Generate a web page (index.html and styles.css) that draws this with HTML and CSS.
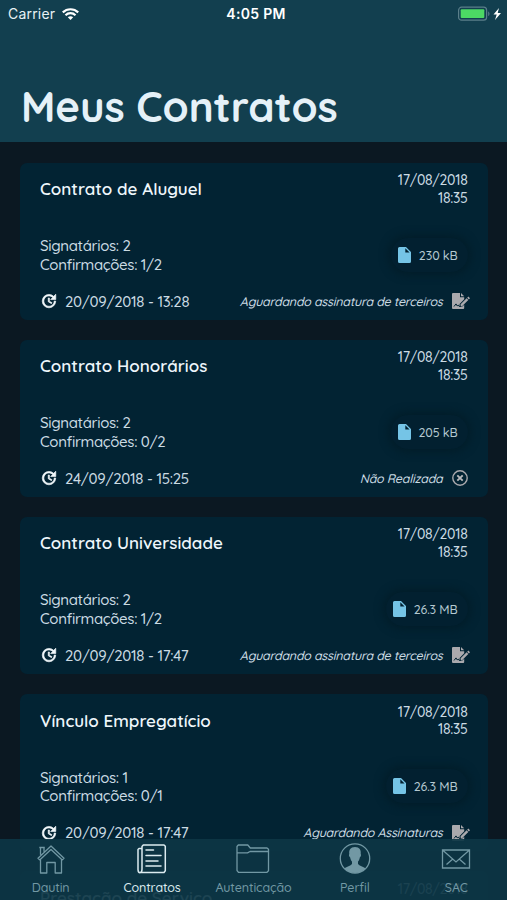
FILE: index.html
```html
<!DOCTYPE html>
<html lang="pt-BR">
<head>
    <meta charset="UTF-8">
    <meta name="viewport" content="width=device-width, initial-scale=1.0">
    <title>Meus Contratos</title>
    <link rel="stylesheet" href="styles.css">
</head>
<body>
    <!-- Shared icons -->
    <svg class="sprite" width="0" height="0">
        <symbol id="icon-update" viewBox="0 0 24 24">
            <path fill="currentColor" d="M21 10.100h-6.800l2.700-2.800c-2.700-2.700-7.100-2.800-9.800-.1a6.900 6.900 0 0 0 0 9.800c2.700 2.700 7.100 2.700 9.800 0 1.400-1.300 2-2.900 2-4.900h2c0 2-.9 4.600-2.600 6.300a8.950 8.950 0 0 1-12.700 0 8.900 8.900 0 0 1 0-12.600 9 9 0 0 1 12.700 0L21 3v7.100zM12.500 8v4.300l3.500 2-.7 1.200L11 13V8h1.500z" stroke="currentColor" stroke-width=".9"/>
        </symbol>
        <symbol id="icon-file" viewBox="0 0 13 16">
            <path fill="#75c4e6" d="M1.500 0H8l5 5v9.500a1.500 1.500 0 0 1-1.500 1.500h-10A1.500 1.500 0 0 1 0 14.500v-13A1.500 1.500 0 0 1 1.500 0z"/>
            <path fill="#022030" d="M7.300 1.200V5.500h4.300z"/>
        </symbol>
        <symbol id="icon-sign" viewBox="0 0 18 16">
            <path fill="#aaa9ad" d="M1 0h7v4.200h4.200v2L7.600 11v2.500h2.800l1.800-1.700V15a1 1 0 0 1-1 1H1a1 1 0 0 1-1-1V1a1 1 0 0 1 1-1z"/>
            <path fill="#aaa9ad" d="M9 0l3.200 3.300H9zM8.600 11.300l6-6 1.700 1.700-6 5.900H8.600zM15.200 4.700l1.100-1.100L18 5.200l-1.100 1.200z"/>
            <path fill="none" stroke="#022333" d="M2 13.500l2-2.600 1.200 2 1-.8.800 1.200h2"/>
        </symbol>
        <symbol id="icon-cancel" viewBox="0 0 16 16">
            <circle cx="8" cy="8" r="7.200" fill="none" stroke="#aaa9ad" stroke-width="1.400"/>
            <path d="M5.300 5.300l5.400 5.400M10.700 5.300l-5.400 5.400" stroke="#b8b8bb" stroke-width="1.900"/>
        </symbol>
    </svg>

    <div class="app">
        <header class="header">
            <div class="status-bar">
                <div class="carrier">
                    <span>Carrier</span>
                    <svg width="17" height="12" viewBox="0 0 17 12" fill="none" stroke="#fff" stroke-width="2.200">
                        <path d="M.8 4.400c4.300-4.200 11.100-4.200 15.400 0M3.500 7.200c2.800-2.700 7.200-2.700 10 0"/>
                        <path d="M8.500 12L5.800 9.300c1.500-1.400 3.900-1.400 5.400 0z" fill="#fff" stroke="none"/>
                    </svg>
                </div>
                <span class="clock">4:05 PM</span>
                <div class="battery">
                    <svg width="44" height="16" viewBox="0 0 44 16">
                        <rect x=".6" y="1.200" width="28" height="13" rx="3" fill="none" stroke="#5b7f8a" stroke-width="1.200"/>
                        <rect x="2.700" y="3.300" width="23.600" height="8.800" rx="1" fill="#4cd964"/>
                        <path d="M30.200 5.500c1.700.6 1.700 4 0 4.600z" fill="#5b7f8a"/>
                        <path d="M41 2l-5.500 6.600h3.200L37 14l6-7h-3.300z" fill="#fff"/>
                    </svg>
                </div>
            </div>
            <h1>Meus Contratos</h1>
        </header>

        <main class="list">
            <article class="card">
                <div class="card-top">
                    <h2>Contrato de Aluguel</h2>
                    <p class="created">17/08/2018<br>18:35</p>
                </div>
                <div class="card-middle">
                    <p class="people">Signatários: 2<br>Confirmações: 1/2</p>
                    <div class="size"><svg width="13" height="16"><use href="#icon-file"/></svg><span>230 kB</span></div>
                </div>
                <div class="card-bottom">
                    <div class="updated"><svg width="18" height="18"><use href="#icon-update"/></svg><span>20/09/2018 - 13:28</span></div>
                    <div class="state"><em>Aguardando assinatura de terceiros</em><svg width="18" height="16"><use href="#icon-sign"/></svg></div>
                </div>
            </article>

            <article class="card">
                <div class="card-top">
                    <h2>Contrato Honorários</h2>
                    <p class="created">17/08/2018<br>18:35</p>
                </div>
                <div class="card-middle">
                    <p class="people">Signatários: 2<br>Confirmações: 0/2</p>
                    <div class="size"><svg width="13" height="16"><use href="#icon-file"/></svg><span>205 kB</span></div>
                </div>
                <div class="card-bottom">
                    <div class="updated"><svg width="18" height="18"><use href="#icon-update"/></svg><span>24/09/2018 - 15:25</span></div>
                    <div class="state cancelled"><em>Não Realizada</em><svg width="16" height="16"><use href="#icon-cancel"/></svg></div>
                </div>
            </article>

            <article class="card">
                <div class="card-top">
                    <h2>Contrato Universidade</h2>
                    <p class="created">17/08/2018<br>18:35</p>
                </div>
                <div class="card-middle">
                    <p class="people">Signatários: 2<br>Confirmações: 1/2</p>
                    <div class="size"><svg width="13" height="16"><use href="#icon-file"/></svg><span>26.3 MB</span></div>
                </div>
                <div class="card-bottom">
                    <div class="updated"><svg width="18" height="18"><use href="#icon-update"/></svg><span>20/09/2018 - 17:47</span></div>
                    <div class="state"><em>Aguardando assinatura de terceiros</em><svg width="18" height="16"><use href="#icon-sign"/></svg></div>
                </div>
            </article>

            <article class="card">
                <div class="card-top">
                    <h2>Vínculo Empregatício</h2>
                    <p class="created">17/08/2018<br>18:35</p>
                </div>
                <div class="card-middle">
                    <p class="people">Signatários: 1<br>Confirmações: 0/1</p>
                    <div class="size"><svg width="13" height="16"><use href="#icon-file"/></svg><span>26.3 MB</span></div>
                </div>
                <div class="card-bottom">
                    <div class="updated"><svg width="18" height="18"><use href="#icon-update"/></svg><span>20/09/2018 - 17:47</span></div>
                    <div class="state"><em>Aguardando Assinaturas</em><svg width="18" height="16"><use href="#icon-sign"/></svg></div>
                </div>
            </article>

            <article class="card">
                <div class="card-top">
                    <h2>Prestação de Serviço</h2>
                    <p class="created">17/08/2018</p>
                </div>
            </article>
        </main>

        <nav class="tab-bar">
            <a class="tab">
                <svg width="30" height="30" viewBox="0 0 30 30" fill="none" stroke="currentColor" stroke-width="1.300" stroke-linejoin="round">
                    <path d="M2 14.200L15 2l13 12.200-1.700 1.700L15 5.500 3.700 15.900zM4.500 10.800V3.500H8v4.300M3.300 3.500h5.500M4.500 15.500V29h6.300V18.500h8.400V29h6.300V15.500"/>
                </svg>
                <span>Dautin</span>
            </a>
            <a class="tab active">
                <svg width="30" height="30" viewBox="0 0 30 30" fill="none" stroke="currentColor" stroke-width="1.500" stroke-linejoin="round" stroke-linecap="round">
                    <path d="M5 4.700V25c0 5-4 4.500-4 .5V5.500l1-1h3M5 4.700V2.500L6.300 1H27l1.300 1.300v24.500L27 28.500H3.500M9 6h7.500M9 11.500h15M9 17h12M9 22h15"/>
                </svg>
                <span>Contratos</span>
            </a>
            <a class="tab">
                <svg width="34" height="30" viewBox="0 0 34 30" fill="none" stroke="currentColor" stroke-width="1.300" stroke-linejoin="round">
                    <path d="M1 26.500V2.500L2.300 1h9.500l2.500 3H31l1.500 1.300v21.500L31 28.300H2.500zM1 8.800h10.500L14 7.500h18.500"/>
                </svg>
                <span>Autenticação</span>
            </a>
            <a class="tab">
                <svg width="32" height="32" viewBox="0 0 32 32">
                    <circle cx="16" cy="15.500" r="14.700" fill="none" stroke="currentColor" stroke-width="1.300"/>
                    <path fill="currentColor" d="M16 4c-4.500 0-6.300 3-5.700 7-.8.900 0 3 .9 3.400.4 2.200 1 3.200 1.800 4.100v2.500c-1.200 1.700-5.500 2.500-7.500 4.500C8.200 28.500 12 30 16 30s7.800-1.500 10.500-4.500c-2-2-6.300-2.800-7.500-4.500v-2.500c.8-.9 1.400-1.900 1.800-4.100.9-.4 1.700-2.500.9-3.400.6-4-1.200-7-5.700-7z"/>
                </svg>
                <span>Perfil</span>
            </a>
            <a class="tab">
                <svg width="30" height="30" viewBox="0 0 30 30" fill="none" stroke="currentColor" stroke-width="1.300">
                    <path d="M1.500 6h27v18h-27zM1.500 6L15 18 28.500 6M5.500 20.500l6.300-5.500M24.500 20.500L18.200 15"/>
                </svg>
                <span>SAC</span>
            </a>
        </nav>
    </div>
</body>
</html>
```

FILE: styles.css
```css
* {
    box-sizing: border-box;
}
body {
    margin: 0;
    background-color: #0b1822;
    color: #cbdbe3;
    font-family: Quicksand, Lato, sans-serif;
    font-weight: 500;
}
h1, h2, p {
    margin: 0;
}
svg {
    display: block;
    flex: none;
}
.sprite {
    position: absolute;
}
.app {
    position: relative;
    height: 900px;
    overflow: hidden;
}
.header {
    height: 142px;
    background-color: #123f4f;
}
.header h1 {
    padding: 54px 0 0 21px;
    font-size: 42px;
    line-height: 50px;
    letter-spacing: -0.1px;
    color: #e5f1f8;
}
.status-bar {
    display: grid;
    grid-template-columns: 1fr auto 1fr;
    align-items: center;
    height: 27px;
    margin-bottom: 1px;
    padding: 0 5px 0 8px;
    font-family: Inter, sans-serif;
    font-size: 14px;
    font-weight: 400;
    color: #e8f2f5;
}
.carrier {
    display: flex;
    align-items: center;
    gap: 7px;
    letter-spacing: 0.2px;
}
.clock {
    padding-left: 2px;
    font-weight: 600;
    letter-spacing: 0.3px;
    color: #fff;
}
.battery {
    display: flex;
    justify-content: flex-end;
}
.list {
    display: flex;
    flex-direction: column;
    gap: 20px;
    padding: 20.500px 19.500px 0 20px;
}
.card {
    display: flex;
    flex-direction: column;
    flex: none;
    height: 157.200px;
    padding: 9.500px 20px 0;
    border-radius: 7px;
    background-color: #022333;
}
.card-top {
    display: flex;
    justify-content: space-between;
    height: 64.500px;
}
.card-top h2 {
    padding-top: 6px;
    font-size: 17px;
    font-weight: 600;
    line-height: 22px;
    color: #eef6fb;
}
.created {
    font-size: 14px;
    line-height: 17.500px;
    letter-spacing: -0.3px;
    text-align: right;
}
.card-middle {
    display: flex;
    justify-content: space-between;
    height: 50px;
}
.people {
    padding-top: 0.5px;
    font-size: 15px;
    line-height: 18.500px;
    letter-spacing: -0.35px;
}
.size {
    display: flex;
    align-items: center;
    gap: 8px;
    height: 34px;
    margin-top: 1px;
    padding: 0 10px 0 7px;
    border-radius: 17px;
    background-color: #022030;
    box-shadow: 0 0 9px 3px #021d29;
    font-size: 12.500px;
    letter-spacing: -0.15px;
    color: #b5c9d1;
}
.card-bottom {
    display: flex;
    align-items: center;
    justify-content: space-between;
    height: 29px;
}
.updated {
    display: flex;
    align-items: center;
    gap: 7px;
    font-size: 15px;
    letter-spacing: -0.3px;
}
.updated svg {
    color: #f2f8fb;
}
.state {
    display: flex;
    align-items: center;
    gap: 9px;
    margin-right: -2px;
    font-size: 12.500px;
    letter-spacing: -0.25px;
}
.state em {
    margin-top: -1px;
}
.cancelled {
    margin-right: 0;
}
.tab-bar {
    position: absolute;
    right: 0;
    bottom: 0;
    left: 0;
    display: grid;
    grid-template-columns: repeat(5, 1fr);
    height: 61px;
    background-color: rgba(13, 54, 69, 0.93);
}
.tab {
    display: flex;
    flex-direction: column;
    align-items: center;
    color: #7298a4;
    font-size: 12.500px;
    line-height: 16px;
    letter-spacing: -0.1px;
}
.tab svg {
    height: 32px;
    margin: 4px 0;
}
.active {
    color: #dcebf0;
}
```
